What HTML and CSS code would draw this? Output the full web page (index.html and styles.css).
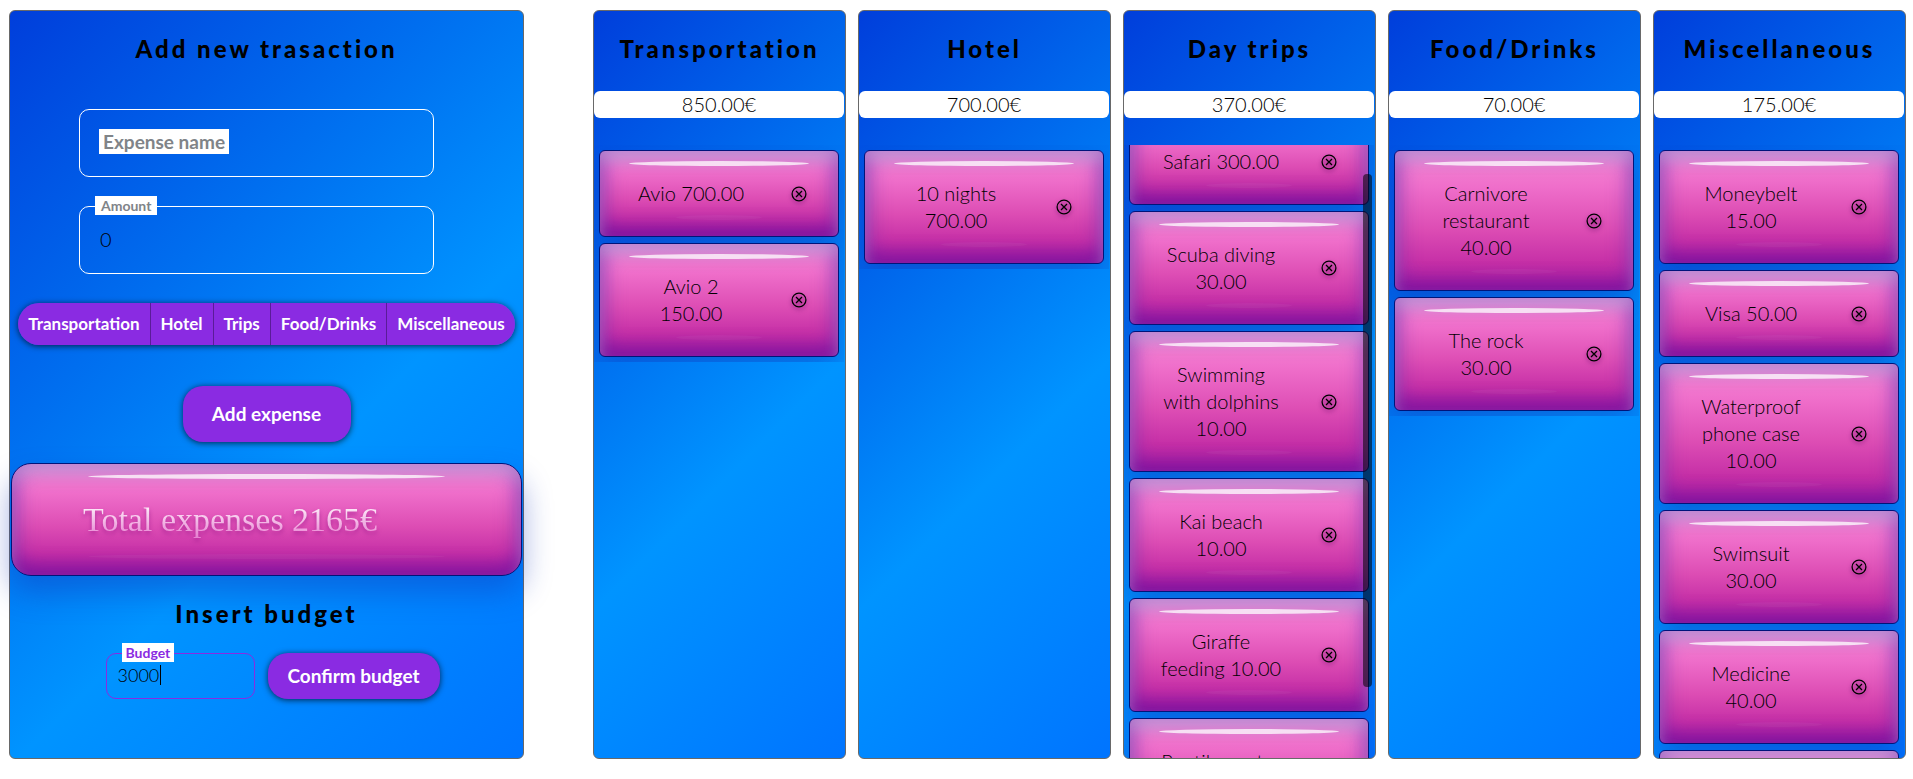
FILE: index.html
```html
<!DOCTYPE html>
<html lang="en">
<head>
<meta charset="utf-8">
<title>Travel expenses</title>
<link rel="stylesheet" href="styles.css">
</head>
<body>
<main class="app">
  <section class="panel entry">
    <h2 class="title">Add new trasaction</h2>
    <form class="entry-form">
      <div class="field">
        <input class="field-input" id="expense-name" type="text">
        <label class="field-label field-label-large" for="expense-name">Expense name</label>
      </div>
      <div class="field">
        <input class="field-input" id="amount" type="text" inputmode="decimal" value="0">
        <label class="field-label field-label-raised" for="amount">Amount</label>
      </div>
      <div class="group" role="group" aria-label="Category">
        <button class="group-button" type="button">Transportation</button>
        <button class="group-button" type="button">Hotel</button>
        <button class="group-button" type="button">Trips</button>
        <button class="group-button" type="button">Food/Drinks</button>
        <button class="group-button" type="button">Miscellaneous</button>
      </div>
      <button class="button button-add" type="button">Add expense</button>
    </form>
    <div class="gloss total"><p class="total-text">Total expenses 2165€</p></div>
    <h2 class="title title-budget">Insert budget</h2>
    <form class="budget-form">
      <div class="budget-field">
        <input class="budget-input" id="budget" type="text" inputmode="decimal" value="3000">
        <label class="budget-label" for="budget">Budget</label>
        <span class="caret"></span>
      </div>
      <button class="button button-confirm" type="button">Confirm budget</button>
    </form>
  </section>

  <div class="board">
    <section class="panel column">
      <h2 class="title">Transportation</h2>
      <p class="sum">850.00€</p>
      <ul class="list">
        <li class="gloss card"><span class="card-text">Avio 700.00</span><button class="remove" type="button" aria-label="Remove"><svg class="icon" viewBox="0 0 16 16"><circle cx="8" cy="8" r="6.9"/><path d="M5 5l6 6M11 5l-6 6"/></svg></button></li>
        <li class="gloss card"><span class="card-text">Avio 2 150.00</span><button class="remove" type="button" aria-label="Remove"><svg class="icon" viewBox="0 0 16 16"><circle cx="8" cy="8" r="6.9"/><path d="M5 5l6 6M11 5l-6 6"/></svg></button></li>
      </ul>
    </section>
    <section class="panel column">
      <h2 class="title">Hotel</h2>
      <p class="sum">700.00€</p>
      <ul class="list">
        <li class="gloss card"><span class="card-text">10 nights 700.00</span><button class="remove" type="button" aria-label="Remove"><svg class="icon" viewBox="0 0 16 16"><circle cx="8" cy="8" r="6.9"/><path d="M5 5l6 6M11 5l-6 6"/></svg></button></li>
      </ul>
    </section>
    <section class="panel column">
      <h2 class="title">Day trips</h2>
      <p class="sum">370.00€</p>
      <ul class="list" id="trips">
        <li class="gloss card"><span class="card-text">Safari 300.00</span><button class="remove" type="button" aria-label="Remove"><svg class="icon" viewBox="0 0 16 16"><circle cx="8" cy="8" r="6.9"/><path d="M5 5l6 6M11 5l-6 6"/></svg></button></li>
        <li class="gloss card"><span class="card-text">Scuba diving 30.00</span><button class="remove" type="button" aria-label="Remove"><svg class="icon" viewBox="0 0 16 16"><circle cx="8" cy="8" r="6.9"/><path d="M5 5l6 6M11 5l-6 6"/></svg></button></li>
        <li class="gloss card"><span class="card-text">Swimming with dolphins 10.00</span><button class="remove" type="button" aria-label="Remove"><svg class="icon" viewBox="0 0 16 16"><circle cx="8" cy="8" r="6.9"/><path d="M5 5l6 6M11 5l-6 6"/></svg></button></li>
        <li class="gloss card"><span class="card-text">Kai beach 10.00</span><button class="remove" type="button" aria-label="Remove"><svg class="icon" viewBox="0 0 16 16"><circle cx="8" cy="8" r="6.9"/><path d="M5 5l6 6M11 5l-6 6"/></svg></button></li>
        <li class="gloss card"><span class="card-text">Giraffe feeding&nbsp;10.00</span><button class="remove" type="button" aria-label="Remove"><svg class="icon" viewBox="0 0 16 16"><circle cx="8" cy="8" r="6.9"/><path d="M5 5l6 6M11 5l-6 6"/></svg></button></li>
        <li class="gloss card"><span class="card-text">Reptile&nbsp;center 10.00</span><button class="remove" type="button" aria-label="Remove"><svg class="icon" viewBox="0 0 16 16"><circle cx="8" cy="8" r="6.9"/><path d="M5 5l6 6M11 5l-6 6"/></svg></button></li>
      </ul>
      <span class="scroll-thumb"></span>
    </section>
    <section class="panel column">
      <h2 class="title">Food/Drinks</h2>
      <p class="sum">70.00€</p>
      <ul class="list">
        <li class="gloss card"><span class="card-text">Carnivore restaurant 40.00</span><button class="remove" type="button" aria-label="Remove"><svg class="icon" viewBox="0 0 16 16"><circle cx="8" cy="8" r="6.9"/><path d="M5 5l6 6M11 5l-6 6"/></svg></button></li>
        <li class="gloss card"><span class="card-text">The rock 30.00</span><button class="remove" type="button" aria-label="Remove"><svg class="icon" viewBox="0 0 16 16"><circle cx="8" cy="8" r="6.9"/><path d="M5 5l6 6M11 5l-6 6"/></svg></button></li>
      </ul>
    </section>
    <section class="panel column">
      <h2 class="title">Miscellaneous</h2>
      <p class="sum">175.00€</p>
      <ul class="list">
        <li class="gloss card"><span class="card-text">Moneybelt 15.00</span><button class="remove" type="button" aria-label="Remove"><svg class="icon" viewBox="0 0 16 16"><circle cx="8" cy="8" r="6.9"/><path d="M5 5l6 6M11 5l-6 6"/></svg></button></li>
        <li class="gloss card"><span class="card-text">Visa 50.00</span><button class="remove" type="button" aria-label="Remove"><svg class="icon" viewBox="0 0 16 16"><circle cx="8" cy="8" r="6.9"/><path d="M5 5l6 6M11 5l-6 6"/></svg></button></li>
        <li class="gloss card"><span class="card-text">Waterproof phone case 10.00</span><button class="remove" type="button" aria-label="Remove"><svg class="icon" viewBox="0 0 16 16"><circle cx="8" cy="8" r="6.9"/><path d="M5 5l6 6M11 5l-6 6"/></svg></button></li>
        <li class="gloss card"><span class="card-text">Swimsuit 30.00</span><button class="remove" type="button" aria-label="Remove"><svg class="icon" viewBox="0 0 16 16"><circle cx="8" cy="8" r="6.9"/><path d="M5 5l6 6M11 5l-6 6"/></svg></button></li>
        <li class="gloss card"><span class="card-text">Medicine 40.00</span><button class="remove" type="button" aria-label="Remove"><svg class="icon" viewBox="0 0 16 16"><circle cx="8" cy="8" r="6.9"/><path d="M5 5l6 6M11 5l-6 6"/></svg></button></li>
        <li class="gloss card card-empty"></li>
      </ul>
    </section>
  </div>
</main>
<script src="app.js"></script>
</body>
</html>
```
FILE: styles.css
```css
* { box-sizing: border-box; }

body {
  margin: 0;
  font-family: Lato, "Open Sans", sans-serif;
  font-size: 20px;
  font-weight: 300;
  line-height: 27px;
  color: #000;
  background: #fff;
}

p, h2, ul { margin: 0; padding: 0; }
button, input { font: inherit; color: #000; }

.app {
  display: grid;
  grid-template-columns: 515fr 1313fr;
  gap: 69px;
  height: 100vh;
  padding: 10px 7px 20px 9px;
}

.board {
  display: grid;
  grid-template-columns: repeat(5, minmax(0, 1fr));
  gap: 12px;
  min-height: 0;
}

.panel {
  display: flex;
  flex-direction: column;
  min-height: 0;
  border: 1px solid #696969;
  border-radius: 6px;
  background: linear-gradient(135deg, #003edb, #0094ff 60%, #0074ff);
}

.column { position: relative; overflow: hidden; }

.title {
  padding: 24px 0 28px;
  font-size: 24px;
  font-weight: 900;
  line-height: 28px;
  letter-spacing: 3px;
  text-align: center;
  white-space: nowrap;
}

.sum {
  margin-right: 1px;
  border-radius: 6px;
  background: #fff;
  text-align: center;
}

.list {
  margin: 27px 1px 0 0;
  padding: 5px;
  display: flex;
  flex-direction: column;
  gap: 6px;
  min-height: 0;
  overflow-y: auto;
  scrollbar-width: none;
  list-style: none;
}

.gloss {
  position: relative;
  flex: none;
  border: 1px solid #00147a;
  background: linear-gradient(#f68ad6, #ef6eca 26%, #dd4db4 56%, #c630a7 80%, #a81ca0);
  box-shadow:
    inset 0 10px 14px rgba(200, 190, 225, 0.45),
    inset 0 -10px 16px rgba(130, 10, 150, 0.55),
    inset 0 0 24px rgba(100, 50, 190, 0.75),
    0 16px 30px rgba(20, 50, 180, 0.4);
}

.gloss::before {
  content: "";
  position: absolute;
  top: 10px;
  left: 12%;
  right: 12%;
  height: 5px;
  border-radius: 50%;
  background: rgba(255, 255, 255, 0.75);
}

.gloss::after {
  content: "";
  position: absolute;
  bottom: 16px;
  left: 32%;
  right: 32%;
  height: 5px;
  border-radius: 50%;
  background: rgba(255, 255, 255, 0.04);
}

.card {
  display: flex;
  align-items: center;
  justify-content: space-between;
  padding: 29px 30px;
  border-radius: 6px;
}

.card-empty { min-height: 87px; }

.card-text { width: 122px; text-align: center; }

.remove {
  display: flex;
  justify-content: center;
  width: 18px;
  padding: 0;
  border: 0;
  background: none;
}

.icon {
  width: 16px;
  height: 16px;
  flex: none;
  fill: none;
  stroke: #000;
  stroke-width: 1.3;
  filter: drop-shadow(0 2px 2px rgba(80, 0, 90, 0.6));
}

.scroll-thumb {
  position: absolute;
  top: 163px;
  right: 3px;
  bottom: 71px;
  width: 9px;
  border-radius: 4px;
  background: rgba(0, 0, 0, 0.55);
}

.entry-form { display: flex; flex-direction: column; align-items: center; }

.field {
  position: relative;
  width: 355px;
  margin: 18px 20px 11px 0;
}

.field-input {
  display: block;
  width: 100%;
  height: 68px;
  padding: 0 20px 2px;
  border: 1px solid #fff;
  border-radius: 10px;
  background: transparent;
  outline: 0;
}

.field-label { position: absolute; background: #fff; color: #808488; font-weight: 700; }
.field-label-large { top: 20px; left: 20px; padding: 0 4px; line-height: 25px; font-size: 19px; }
.field-label-raised { top: -10px; left: 16px; padding: 0 6px; line-height: 19px; font-size: 14px; }

.group {
  display: flex;
  margin-top: 18px;
  border-radius: 21px;
  box-shadow: 0 1px 6px rgba(0, 0, 0, 0.7);
}

.group-button {
  height: 42px;
  padding: 0 10px 2px;
  border: 0;
  border-right: 1px solid #5a1c98;
  background: #8a2be2;
  color: #fff;
  font-size: 17px;
  font-weight: 700;
}
.group-button:first-child { border-radius: 21px 0 0 21px; }
.group-button:last-child { border-right: 0; border-radius: 0 21px 21px 0; }

.button {
  padding: 0 0 2px;
  border: 0;
  border-radius: 20px;
  background: #8a2be2;
  color: #fff;
  font-size: 19px;
  font-weight: 700;
  box-shadow: 0 1px 6px rgba(0, 0, 0, 0.7);
}

.button-add { width: 168px; height: 56px; margin: 41px 0 21px; }
.button-confirm { width: 172px; height: 46px; }

.total {
  margin: 0 1px;
  padding: 29px 71px 28px;
  border-radius: 20px;
}
.total::before { left: 15%; right: 15%; }
.total::after { left: 15%; right: 15%; }

.total-text {
  font-family: "Liberation Serif", serif;
  font-size: 34px;
  font-weight: 400;
  line-height: 54px;
  color: transparent;
  background: linear-gradient(rgba(255, 255, 255, 0.95) 20%, rgba(255, 180, 240, 0.6) 80%);
  background-clip: text;
  filter: drop-shadow(0 3px 2px rgba(120, 0, 120, 0.6));
}

.title-budget { padding: 24px 0 25px; }

.budget-form { display: flex; justify-content: center; gap: 13px; padding-left: 12px; }
.budget-field { position: relative; width: 149px; }

.budget-input {
  display: block;
  width: 100%;
  height: 46px;
  padding: 0 11px 2px;
  border: 1px solid #8a2be2;
  border-radius: 10px;
  background: transparent;
  outline: 0;
  font-size: 18px;
}

.budget-label {
  position: absolute;
  top: -10px;
  left: 16px;
  padding: 0 4px;
  background: #fff;
  color: #8a2be2;
  font-size: 14px;
  font-weight: 700;
  line-height: 19px;
}

.caret {
  position: absolute;
  top: 12px;
  left: 54px;
  width: 1px;
  height: 20px;
  background: #000;
}
```
FILE: app.js
```js
document.getElementById("trips").scrollTop = 32;
```
